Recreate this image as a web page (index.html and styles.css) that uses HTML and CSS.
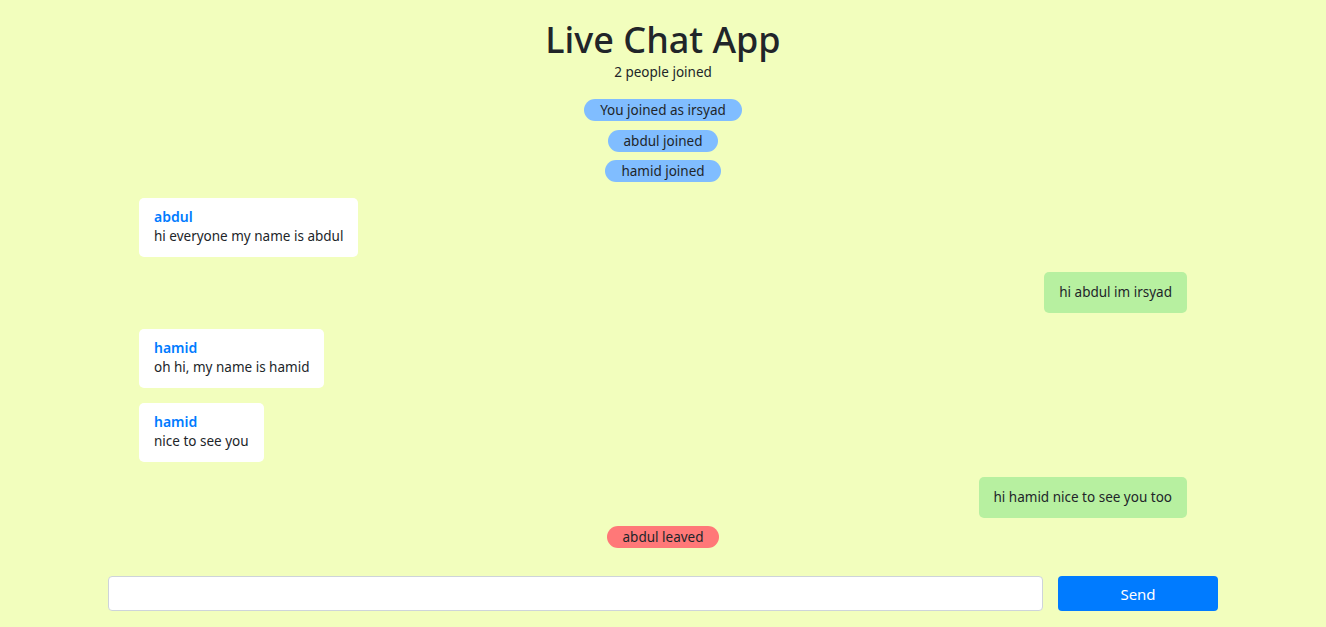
FILE: index.html
```html
<!DOCTYPE html>
<html lang="en">
<head>
<meta charset="utf-8">
<title>Live Chat App</title>
<link rel="stylesheet" href="styles.css">
</head>
<body>
<div class="container">
  <header class="header">
    <h1 class="title">Live Chat App</h1>
    <p class="subtitle">2 people joined</p>
  </header>
  <div class="chat">
    <div class="notice">You joined as irsyad</div>
    <div class="notice">abdul joined</div>
    <div class="notice">hamid joined</div>

    <div class="msg msg-in">
      <div class="msg-name">abdul</div>
      <div class="msg-text">hi everyone my name is abdul</div>
    </div>
    <div class="msg msg-out">
      <div class="msg-text">hi abdul im irsyad</div>
    </div>
    <div class="msg msg-in">
      <div class="msg-name">hamid</div>
      <div class="msg-text">oh hi, my name is hamid</div>
    </div>
    <div class="msg msg-in">
      <div class="msg-name">hamid</div>
      <div class="msg-text">nice to see you</div>
    </div>
    <div class="msg msg-out">
      <div class="msg-text">hi hamid nice to see you too</div>
    </div>
    <div class="notice notice-leave">abdul leaved</div>
  </div>
  <form class="composer">
    <input class="composer-input" type="text">
    <button class="composer-send" type="button">Send</button>
  </form>
</div>
</body>
</html>
```

FILE: styles.css
```css
html, body {
  margin: 0;
  padding: 0;
}
body {
  background: #f2febd;
  color: #212529;
  font-family: "Noto Sans", "Open Sans", sans-serif;
  font-size: 14px;
  line-height: 1.5;
}
.container {
  max-width: 1110px;
  margin: 0 auto;
  padding: 0 15px;
}
.header {
  text-align: center;
  padding-top: 17px;
}
.title {
  margin: 0;
  font-size: 36px;
  font-weight: 500;
  line-height: 46px;
}
.subtitle {
  margin: 0;
  font-size: 13.5px;
  line-height: 18px;
}
.chat {
  display: flow-root;
  padding: 0 31px;
  margin-top: 10px;
}
.notice {
  display: table;
  margin: 8px auto;
  padding: 0 16px;
  line-height: 22px;
  font-size: 13.5px;
  background: #80bdff;
  border-radius: 12px;
}
.notice + .notice {
  margin-top: 8.5px;
}
.notice-leave {
  background: #ff7878;
}
.msg {
  width: fit-content;
  margin: 15px 0 0;
  padding: 10px 15px;
  border-radius: 5px;
}
.notice + .msg {
  margin-top: 16px;
}
.msg-out + .msg-in {
  margin-top: 16px;
}
.msg-in {
  background: #ffffff;
  margin-right: auto;
}
.msg-out {
  background: #b7f0a0;
  margin-left: auto;
}
.msg-name {
  color: #007bff;
  font-weight: 600;
  font-size: 14px;
  line-height: 18px;
}
.msg-text {
  font-size: 13.5px;
  line-height: 21px;
}
.composer {
  display: flex;
  gap: 15px;
  margin-top: 20px;
}
.composer-input {
  flex: 1;
  height: 35px;
  box-sizing: border-box;
  border: 1px solid #ced4da;
  border-radius: 4px;
  background: #fff;
  padding: 6px 12px;
  font: inherit;
}
.composer-send {
  width: 160px;
  height: 35px;
  border: none;
  border-radius: 4px;
  background: #007bff;
  color: #fff;
  font-family: inherit;
  font-size: 15px;
}
```
